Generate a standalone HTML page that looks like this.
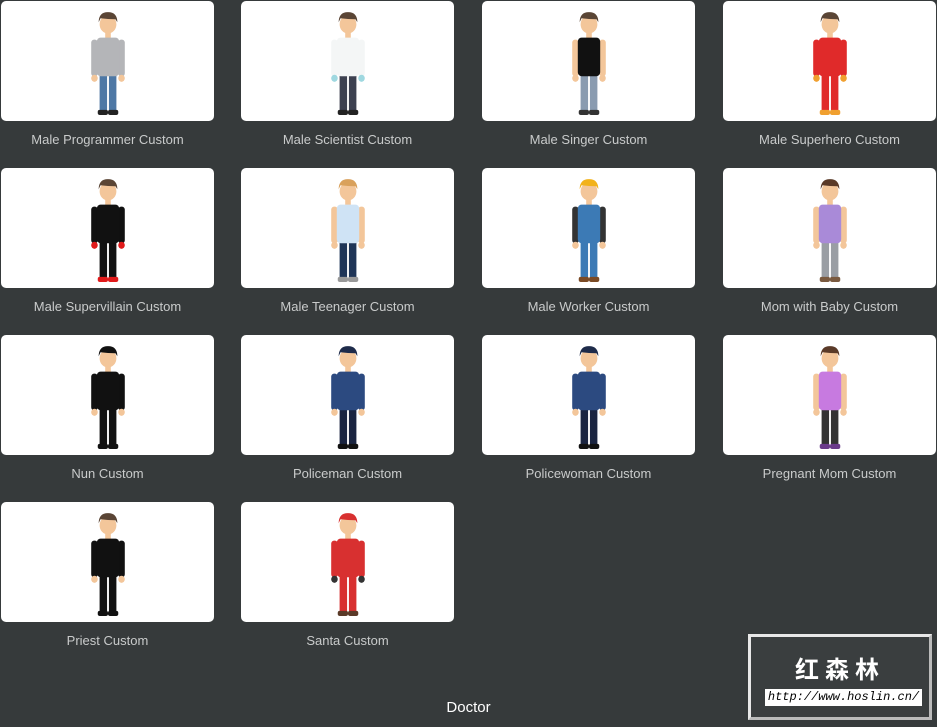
<!DOCTYPE html><html><head><meta charset="utf-8"><style>
body{margin:0;width:937px;height:727px;background:#363a3b;position:relative;overflow:hidden;font-family:"Liberation Sans",sans-serif}
.c{position:absolute;width:213px;height:120px;background:#fff;border-radius:5px}
.c svg{position:absolute;left:79px;top:5px}
.l{position:absolute;width:213px;text-align:center;color:#c9cbcb;font-size:13px}
</style></head><body>
<svg width="0" height="0" style="position:absolute"><defs><symbol id="f" viewBox="0 0 60 110" preserveAspectRatio="none">
<rect x="21" y="66" width="8" height="38" fill="var(--p)"/><rect x="31" y="66" width="8" height="38" fill="var(--p)"/>
<rect x="19" y="102" width="11" height="5" rx="2" fill="var(--s)"/><rect x="30" y="102" width="11" height="5" rx="2" fill="var(--s)"/>
<rect x="12" y="33" width="7" height="36" rx="3" fill="var(--a)"/><rect x="41" y="33" width="7" height="36" rx="3" fill="var(--a)"/>
<circle cx="15.5" cy="71" r="3.5" fill="var(--g)"/><circle cx="44.5" cy="71" r="3.5" fill="var(--g)"/>
<rect x="27" y="26" width="6" height="7" fill="#f3c69a"/>
<rect x="18" y="31" width="24" height="38" rx="4" fill="var(--t)"/>
<circle cx="30" cy="18" r="9" fill="#f3c69a"/>
<path d="M20 16 Q20 6 30 6 Q40 6 40 16 L38 13 Q30 13 22 12 Z" fill="var(--h)"/>
</symbol></defs></svg>

<div class="c" style="left:1px;top:1px"><svg width="56" height="112" style="--h:#5a4535;--t:#b4b5b8;--a:#b4b5b8;--p:#4e78a5;--s:#222;--g:#f3c69a"><use href="#f"/></svg></div>
<div class="c" style="left:241px;top:1px"><svg width="56" height="112" style="--h:#5a4535;--t:#f4f6f6;--a:#f4f6f6;--p:#3d4150;--s:#222;--g:#9fd8e0"><use href="#f"/></svg></div>
<div class="c" style="left:482px;top:1px"><svg width="56" height="112" style="--h:#5a4535;--t:#111;--a:#f3c69a;--p:#8a9bb0;--s:#333;--g:#f3c69a"><use href="#f"/></svg></div>
<div class="c" style="left:723px;top:1px"><svg width="56" height="112" style="--h:#5a4535;--t:#e02a2a;--a:#e02a2a;--p:#e02a2a;--s:#f0a030;--g:#f0a030"><use href="#f"/></svg></div>

<div class="c" style="left:1px;top:168px"><svg width="56" height="112" style="--h:#5a4535;--t:#111;--a:#111;--p:#111;--s:#e01a1a;--g:#e01a1a"><use href="#f"/></svg></div>
<div class="c" style="left:241px;top:168px"><svg width="56" height="112" style="--h:#d9a15c;--t:#cfe3f5;--a:#f3c69a;--p:#1f3557;--s:#999;--g:#f3c69a"><use href="#f"/></svg></div>
<div class="c" style="left:482px;top:168px"><svg width="56" height="112" style="--h:#f2b21a;--t:#3c7ab5;--a:#333;--p:#3c7ab5;--s:#7a4a25;--g:#f3c69a"><use href="#f"/></svg></div>
<div class="c" style="left:723px;top:168px"><svg width="56" height="112" style="--h:#5a3a28;--t:#a98ad8;--a:#f3c69a;--p:#9a9ea4;--s:#7a5a40;--g:#f3c69a"><use href="#f"/></svg></div>

<div class="c" style="left:1px;top:335px"><svg width="56" height="112" style="--h:#111;--t:#111;--a:#111;--p:#111;--s:#111;--g:#f3c69a"><use href="#f"/></svg></div>
<div class="c" style="left:241px;top:335px"><svg width="56" height="112" style="--h:#1e2b4a;--t:#2c4a80;--a:#2c4a80;--p:#1a2440;--s:#111;--g:#f3c69a"><use href="#f"/></svg></div>
<div class="c" style="left:482px;top:335px"><svg width="56" height="112" style="--h:#1e2b4a;--t:#2c4a80;--a:#2c4a80;--p:#1a2440;--s:#111;--g:#f3c69a"><use href="#f"/></svg></div>
<div class="c" style="left:723px;top:335px"><svg width="56" height="112" style="--h:#5a3a28;--t:#c77ae0;--a:#f3c69a;--p:#333;--s:#6a3a8a;--g:#f3c69a"><use href="#f"/></svg></div>

<div class="c" style="left:1px;top:502px"><svg width="56" height="112" style="--h:#5a4535;--t:#111;--a:#111;--p:#111;--s:#111;--g:#f3c69a"><use href="#f"/></svg></div>
<div class="c" style="left:241px;top:502px"><svg width="56" height="112" style="--h:#d83030;--t:#d83030;--a:#d83030;--p:#d83030;--s:#5a3a28;--g:#333"><use href="#f"/></svg></div>

<div class="l" style="left:1px;top:132px">Male Programmer Custom</div>
<div class="l" style="left:241px;top:132px">Male Scientist Custom</div>
<div class="l" style="left:482px;top:132px">Male Singer Custom</div>
<div class="l" style="left:723px;top:132px">Male Superhero Custom</div>
<div class="l" style="left:1px;top:299px">Male Supervillain Custom</div>
<div class="l" style="left:241px;top:299px">Male Teenager Custom</div>
<div class="l" style="left:482px;top:299px">Male Worker Custom</div>
<div class="l" style="left:723px;top:299px">Mom with Baby Custom</div>
<div class="l" style="left:1px;top:466px">Nun Custom</div>
<div class="l" style="left:241px;top:466px">Policeman Custom</div>
<div class="l" style="left:482px;top:466px">Policewoman Custom</div>
<div class="l" style="left:723px;top:466px">Pregnant Mom Custom</div>
<div class="l" style="left:1px;top:633px">Priest Custom</div>
<div class="l" style="left:241px;top:633px">Santa Custom</div>

<div style="position:absolute;left:0;width:937px;top:699px;text-align:center;color:#fff;font-size:15px">Doctor</div>

<div style="position:absolute;left:748px;top:634px;width:178px;height:80px;border:3px solid #e8e8e8;border-right-color:#bbb;border-bottom-color:#bbb;background:#3a3e3f"></div>
<div style="position:absolute;left:748px;top:650px;width:184px;text-align:center;color:#fff;font-size:24px;font-weight:bold;letter-spacing:6px;font-family:'Liberation Sans','Noto Sans CJK SC',sans-serif">红森林</div>
<div style="position:absolute;left:765px;top:689px;width:157px;height:17px;background:#fff;color:#000;font:italic 12px/17px 'Liberation Mono',monospace;text-align:center;overflow:hidden;white-space:nowrap">http://www.hoslin.cn/</div>
</body></html>
